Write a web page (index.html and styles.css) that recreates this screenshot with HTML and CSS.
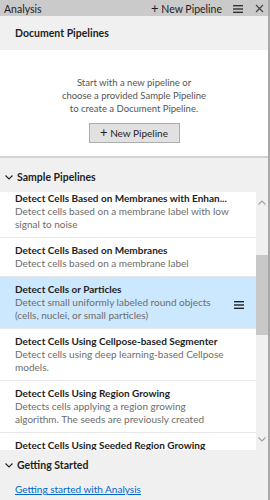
FILE: index.html
```html
<!DOCTYPE html>
<html>
<head>
<meta charset="utf-8">
<link rel="stylesheet" href="styles.css">
</head>
<body>
<div class="panel">
  <div class="topbar">
    <span class="top-title">Analysis</span>
    <span class="top-actions">
      <span class="top-new"><span class="plus">+</span> New Pipeline</span>
      <svg class="menu-icon" width="10" height="8" viewBox="0 0 10 8"><rect x="0" y="0" width="10" height="1.4" fill="#333"/><rect x="0" y="3.3" width="10" height="1.4" fill="#333"/><rect x="0" y="6.6" width="10" height="1.4" fill="#333"/></svg>
      <svg class="close-icon" width="9" height="9" viewBox="0 0 9 9"><path d="M1 1 L8 8 M8 1 L1 8" stroke="#444" stroke-width="1.2"/></svg>
    </span>
  </div>
  <div class="doc-head">Document Pipelines</div>
  <div class="doc-body">
    <p class="doc-text">Start with a new pipeline or<br>choose a provided Sample Pipeline<br>to create a Document Pipeline.</p>
    <button class="btn"><span class="plus">+</span> New Pipeline</button>
  </div>
  <div class="section-head sp"><svg class="chev" width="8" height="5" viewBox="0 0 8 5"><path d="M0.5 0.5 L4 4 L7.5 0.5" fill="none" stroke="#222" stroke-width="1.1"/></svg>Sample Pipelines</div>
  <div class="list-wrap">
    <div class="list">
      <div class="list-inner">
        <div class="item">
          <div class="item-title">Detect Cells Based on Membranes with Enhan...</div>
          <div class="item-desc">Detect cells based on a membrane label with low<br>signal to noise</div>
        </div>
        <div class="item">
          <div class="item-title">Detect Cells Based on Membranes</div>
          <div class="item-desc">Detect cells based on a membrane label</div>
        </div>
        <div class="item selected">
          <div class="item-title">Detect Cells or Particles</div>
          <div class="item-desc">Detect small uniformly labeled round objects<br>(cells, nuclei, or small particles)</div>
          <svg class="item-menu" width="10" height="8" viewBox="0 0 10 8"><rect x="0" y="0" width="10" height="1.4" fill="#222"/><rect x="0" y="3.3" width="10" height="1.4" fill="#222"/><rect x="0" y="6.6" width="10" height="1.4" fill="#222"/></svg>
        </div>
        <div class="item">
          <div class="item-title">Detect Cells Using Cellpose-based Segmenter</div>
          <div class="item-desc">Detect cells using deep learning-based Cellpose<br>models.</div>
        </div>
        <div class="item">
          <div class="item-title">Detect Cells Using Region Growing</div>
          <div class="item-desc">Detects cells applying a region growing<br>algorithm. The seeds are previously created</div>
        </div>
        <div class="item">
          <div class="item-title">Detect Cells Using Seeded Region Growing</div>
        </div>
      </div>
    </div>
    <div class="scrollbar">
      <svg class="arrow" width="8" height="5" viewBox="0 0 8 5"><path d="M0.5 4.5 L4 1 L7.5 4.5" fill="none" stroke="#a0a0a0" stroke-width="1.1"/></svg>
      <div class="track"><div class="thumb"></div></div>
      <svg class="arrow" width="8" height="5" viewBox="0 0 8 5"><path d="M0.5 0.5 L4 4 L7.5 0.5" fill="none" stroke="#a0a0a0" stroke-width="1.1"/></svg>
    </div>
  </div>
  <div class="getting">
    <div class="section-head gs"><svg class="chev" width="8" height="5" viewBox="0 0 8 5"><path d="M0.5 0.5 L4 4 L7.5 0.5" fill="none" stroke="#222" stroke-width="1.1"/></svg>Getting Started</div>
    <a class="gs-link" href="#">Getting started with Analysis</a>
  </div>
</div>
</body>
</html>
```
FILE: styles.css
```css
* { box-sizing: border-box; }
html, body { margin: 0; padding: 0; }
body {
  width: 270px;
  height: 500px;
  overflow: hidden;
  font-family: "Lato", "Noto Sans", sans-serif;
  font-size: 10px;
  color: #1e1e1e;
  background: #f0f0f0;
}
.panel {
  width: 270px;
  height: 500px;
  display: flex;
  flex-direction: column;
  border-right: 2px solid #a8a8a8;
}
.topbar {
  height: 16px;
  background: #cacaca;
  display: flex;
  align-items: center;
  justify-content: space-between;
  padding: 1px 0 0 4px;
  flex: none;
}
.top-title { color: #1e1e1e; font-size: 10.5px; }
.top-actions { display: flex; align-items: center; }
.top-new { color: #1e1e1e; margin-right: 11px; font-size: 10.5px; }
.plus { font-size: 13px; line-height: 10px; }
.menu-icon { margin-right: 12px; }
.close-icon { margin-right: 4px; }
.doc-head {
  height: 34px;
  flex: none;
  background: #f0f0f0;
  font-weight: 700;
  font-size: 10.5px;
  padding-left: 15px;
  display: flex;
  align-items: center;
}
.doc-body {
  flex: none;
  height: 108px;
  background: #fff;
  display: flex;
  flex-direction: column;
  align-items: center;
  padding-top: 26px;
  border-bottom: 2px solid #d2d2d2;
}
.doc-text {
  margin: 0;
  text-align: center;
  line-height: 13px;
  font-size: 9.5px;
  color: #555;
}
.btn {
  margin-top: 8px;
  width: 91px;
  height: 20px;
  background: #e1e1e1;
  border: 1px solid #adadad;
  font-family: inherit;
  font-size: 10px;
  color: #1e1e1e;
  padding: 0;
}
.section-head {
  flex: none;
  display: flex;
  align-items: center;
  padding-left: 5px;
  font-weight: 700;
  font-size: 10.5px;
  background: #f0f0f0;
}
.sp { height: 34px; padding-top: 4px; }
.chev { margin-right: 4px; }
.list-wrap {
  flex: none;
  height: 258px;
  display: flex;
  background: #f0f0f0;
}
.list {
  width: 256px;
  height: 258px;
  overflow: hidden;
  background: #fff;
}
.list-inner { margin-top: -6px; }
.item {
  position: relative;
  padding: 6px 16px 6px 15px;
  border-bottom: 1px solid #e8e8e8;
  line-height: 13px;
  background: #fff;
  white-space: nowrap;
}
.item.selected { background: #cce8ff; }
.item-title { font-weight: 700; color: #1e1e1e; overflow: hidden; }
.item-desc { color: #6d6d6d; }
.item-menu { position: absolute; right: 12px; top: 24px; }
.scrollbar {
  width: 12px;
  display: flex;
  flex-direction: column;
  align-items: center;
  background: #f0f0f0;
}
.arrow { flex: none; margin: 8px 0; }
.track { flex: 1; width: 12px; position: relative; }
.thumb { position: absolute; left: 0; top: 42px; width: 12px; height: 80px; background: #c8c8c8; }
.getting { flex: 1; background: #f0f0f0; }
.gs { height: 30px; }
.gs-link {
  display: block;
  padding-left: 15px;
  margin-top: 3px;
  color: #0066cc;
  text-decoration: underline;
}
```
